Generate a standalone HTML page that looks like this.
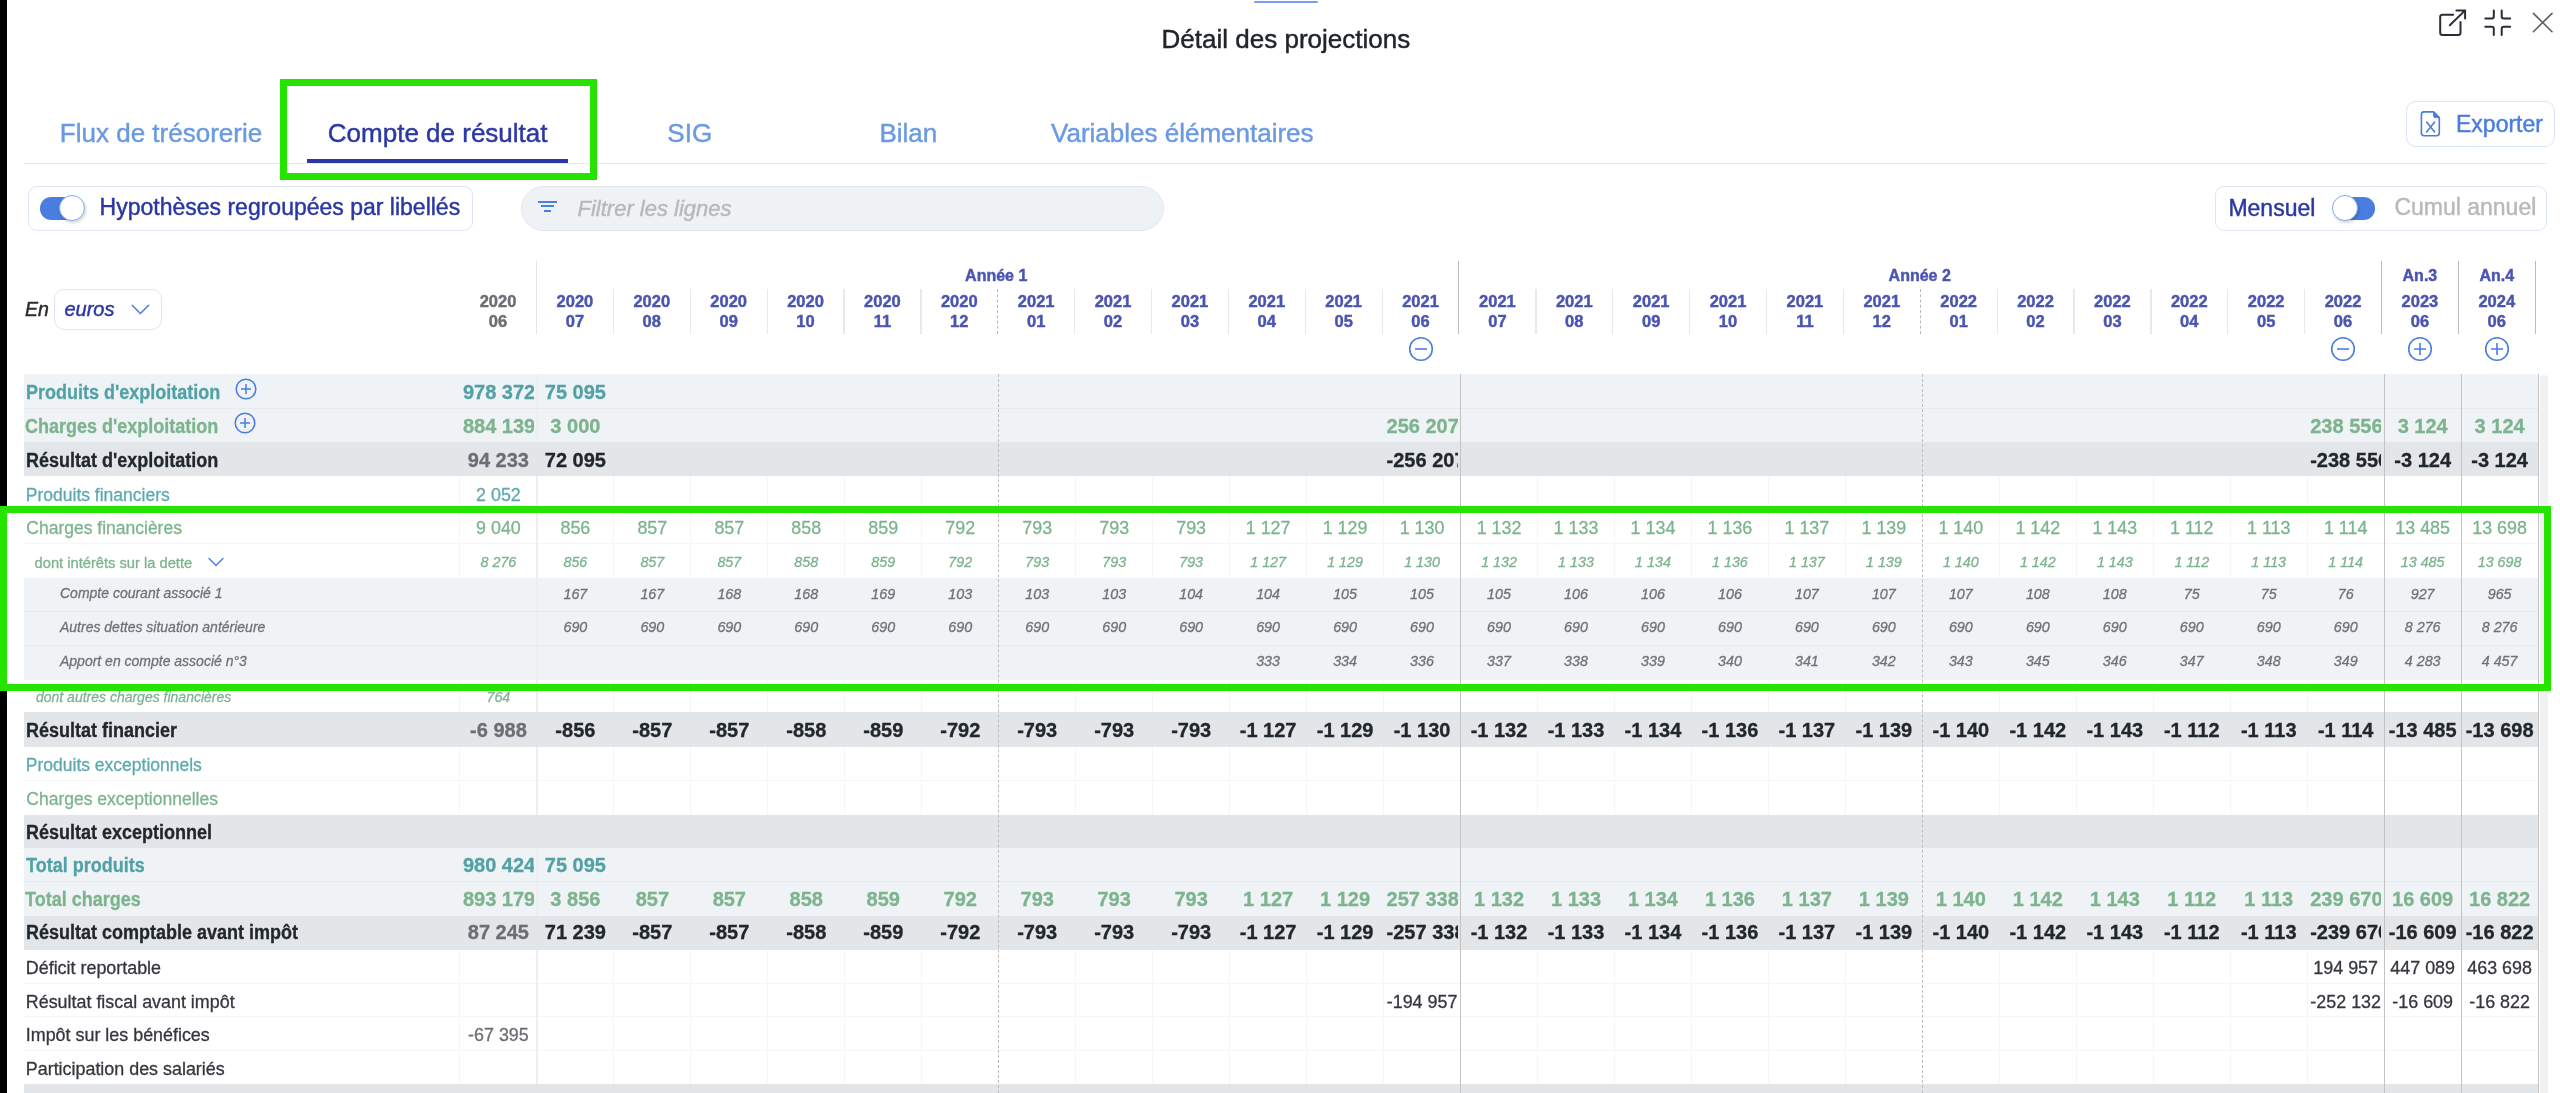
<!DOCTYPE html>
<html><head><meta charset="utf-8"><style>
html,body{margin:0;padding:0;}
body{width:2560px;height:1093px;overflow:hidden;background:#fff;position:relative;font-family:"Liberation Sans", sans-serif;}
.t{position:absolute;white-space:nowrap;line-height:normal;}
.r{position:absolute;}
.c{position:absolute;white-space:nowrap;overflow:hidden;-webkit-text-stroke:0.3px currentColor;}
.t{-webkit-text-stroke:0.45px currentColor;}
.v{text-align:center;}
#root{position:absolute;left:0;top:0;width:2560px;height:1093px;overflow:hidden;background:#fff;will-change:transform;}
</style></head><body><div id="root">
<div class="r" style="left:0.00px;top:0.00px;width:7.00px;height:1093.00px;background:#000"></div>
<div class="r" style="left:1254.00px;top:1.00px;width:64.00px;height:2.00px;background:#7b9ff0;border-radius:1px"></div>
<div class="t" style="left:885.90px;width:800px;text-align:center;top:24.04px;font-size:26px;color:#212529;font-weight:normal;font-style:normal;">Détail des projections</div>
<svg class="r" style="left:2430px;top:0px" width="130" height="50" viewBox="2430 0 130 50" fill="none">
<path d="M2453.1 14.8 H2442.5 Q2440.2 14.8 2440.2 17.1 V32.7 Q2440.2 35 2442.5 35 H2458.2 Q2460.5 35 2460.5 32.7 V22.1" stroke="#2a2d35" stroke-width="2" stroke-linecap="round"/>
<path d="M2449.8 25.2 L2465.1 10.4 M2456.4 10.4 H2465.1 V18.6" stroke="#2a2d35" stroke-width="2" stroke-linecap="round" stroke-linejoin="round"/>
<path d="M2493.8 10.4 V16.6 Q2493.8 18.6 2491.8 18.6 H2485.3 M2501.7 10.4 V16.6 Q2501.7 18.6 2503.7 18.6 H2510.2 M2485.3 26.8 H2491.8 Q2493.8 26.8 2493.8 28.8 V35 M2510.2 26.8 H2503.7 Q2501.7 26.8 2501.7 28.8 V35" stroke="#2a2d35" stroke-width="2" stroke-linecap="round"/>
<path d="M2533.4 13.4 L2552 31.7 M2552 13.4 L2533.4 31.7" stroke="#5b5e64" stroke-width="1.6" stroke-linecap="round"/>
</svg>
<div class="t" style="left:-239.00px;width:800px;text-align:center;top:117.84px;font-size:26px;color:#6b9ae3;font-weight:normal;font-style:normal;">Flux de trésorerie</div>
<div class="t" style="left:37.70px;width:800px;text-align:center;top:117.84px;font-size:26px;color:#2b37a4;font-weight:normal;font-style:normal;">Compte de résultat</div>
<div class="t" style="left:289.75px;width:800px;text-align:center;top:117.84px;font-size:26px;color:#6b9ae3;font-weight:normal;font-style:normal;">SIG</div>
<div class="t" style="left:508.40px;width:800px;text-align:center;top:117.84px;font-size:26px;color:#6b9ae3;font-weight:normal;font-style:normal;">Bilan</div>
<div class="t" style="left:782.30px;width:800px;text-align:center;top:117.84px;font-size:26px;color:#6b9ae3;font-weight:normal;font-style:normal;">Variables élémentaires</div>
<div class="r" style="left:24.00px;top:163.00px;width:2523.40px;height:1.20px;background:#e8eaed"></div>
<div class="r" style="left:307.20px;top:159.00px;width:260.60px;height:4.30px;background:#2b37a4"></div>
<div class="r" style="left:2405.60px;top:101.30px;width:149.60px;height:45.40px;border:1px solid #dae3f8;border-radius:10px;box-sizing:border-box"></div>
<svg class="r" style="left:2418px;top:108px" width="26" height="32" viewBox="2418 108 26 32" fill="none">
<path d="M2424 111.9 H2433.6 L2439.3 117.6 V133.1 Q2439.3 135.7 2436.7 135.7 H2424 Q2421.4 135.7 2421.4 133.1 V114.5 Q2421.4 111.9 2424 111.9 Z" stroke="#4a7de0" stroke-width="1.6" stroke-linejoin="round"/>
<path d="M2433.6 111.9 L2439.3 117.6 H2435.2 Q2433.6 117.6 2433.6 116 Z" fill="#4a7de0" stroke="#4a7de0" stroke-width="1" stroke-linejoin="round"/>
<path d="M2426.6 122 L2434.6 132 M2434.6 122 L2426.6 132" stroke="#4a7de0" stroke-width="1.6" stroke-linecap="round"/>
</svg>
<div class="t" style="left:2456.00px;top:110.60px;font-size:23px;color:#4a7de0;font-weight:normal;font-style:normal;">Exporter</div>
<div class="r" style="left:27.90px;top:186.25px;width:444.90px;height:44.50px;border:1px solid #dde5f6;border-radius:9px;box-sizing:border-box"></div>
<div class="r" style="left:40.30px;top:197.00px;width:36.50px;height:22.60px;background:#4a7de0;border-radius:11.3px"></div>
<div class="r" style="left:59.40px;top:195.40px;width:26.00px;height:26.00px;background:#fff;border:1.3px solid #86a8ee;border-radius:50%;box-sizing:border-box;box-shadow:1px 2px 3px rgba(0,0,0,.16)"></div>
<div class="t" style="left:99.60px;top:194.30px;font-size:23px;color:#2b37a4;font-weight:normal;font-style:normal;">Hypothèses regroupées par libellés</div>
<div class="r" style="left:521.00px;top:186.00px;width:643.30px;height:44.70px;background:#eff2f5;border:1px solid #e3e7ec;border-radius:23px;box-sizing:border-box"></div>
<div class="r" style="left:538.30px;top:200.70px;width:18.30px;height:2.00px;background:#4a7de0"></div>
<div class="r" style="left:541.00px;top:205.40px;width:13.00px;height:2.00px;background:#4a7de0"></div>
<div class="r" style="left:544.00px;top:210.40px;width:6.60px;height:2.00px;background:#4a7de0"></div>
<div class="t" style="left:577.50px;top:195.82px;font-size:22px;color:#b6b9bd;font-weight:normal;font-style:italic;">Filtrer les lignes</div>
<div class="r" style="left:2215.30px;top:186.40px;width:332.10px;height:44.30px;border:1px solid #dde5f6;border-radius:9px;box-sizing:border-box"></div>
<div class="t" style="left:2228.40px;top:194.60px;font-size:23px;color:#2b37a4;font-weight:normal;font-style:normal;">Mensuel</div>
<div class="r" style="left:2338.50px;top:197.30px;width:36.60px;height:22.40px;background:#4a7de0;border-radius:11.2px"></div>
<div class="r" style="left:2331.90px;top:195.40px;width:26.00px;height:26.00px;background:#fff;border:1.3px solid #86a8ee;border-radius:50%;box-sizing:border-box;box-shadow:1px 2px 3px rgba(0,0,0,.16)"></div>
<div class="t" style="left:2394.40px;top:194.30px;font-size:23px;color:#b9b9b9;font-weight:normal;font-style:normal;">Cumul annuel</div>
<div class="t" style="left:25.10px;top:298.03px;font-size:19.5px;color:#2b2b2b;font-weight:normal;font-style:italic;">En</div>
<div class="r" style="left:53.70px;top:288.60px;width:108.30px;height:41.40px;border:1px solid #dde5f6;border-radius:10px;box-sizing:border-box"></div>
<div class="t" style="left:64.40px;top:297.77px;font-size:20px;color:#2b37a4;font-weight:normal;font-style:italic;">euros</div>
<svg class="r" style="left:128px;top:300px" width="24" height="18" viewBox="128 300 24 18" fill="none"><path d="M132.2 305.2 L140.4 313.6 L148.6 305.2" stroke="#4a7de0" stroke-width="1.5" stroke-linecap="round" stroke-linejoin="round"/></svg>
<div class="r" style="left:535.98px;top:261.00px;width:1.00px;height:72.50px;background:#e4e6ea"></div>
<div class="r" style="left:612.75px;top:288.50px;width:1.30px;height:45.00px;background:#e7e9ee"></div>
<div class="r" style="left:689.62px;top:288.50px;width:1.30px;height:45.00px;background:#e7e9ee"></div>
<div class="r" style="left:766.50px;top:288.50px;width:1.30px;height:45.00px;background:#e7e9ee"></div>
<div class="r" style="left:843.38px;top:288.50px;width:1.30px;height:45.00px;background:#e7e9ee"></div>
<div class="r" style="left:920.25px;top:288.50px;width:1.30px;height:45.00px;background:#e7e9ee"></div>
<div class="r" style="left:997.12px;top:288.5px;width:0;height:45px;border-left:1.2px dashed #b9b9b9"></div>
<div class="r" style="left:1074.00px;top:288.50px;width:1.30px;height:45.00px;background:#e7e9ee"></div>
<div class="r" style="left:1150.88px;top:288.50px;width:1.30px;height:45.00px;background:#e7e9ee"></div>
<div class="r" style="left:1227.75px;top:288.50px;width:1.30px;height:45.00px;background:#e7e9ee"></div>
<div class="r" style="left:1304.62px;top:288.50px;width:1.30px;height:45.00px;background:#e7e9ee"></div>
<div class="r" style="left:1381.50px;top:288.50px;width:1.30px;height:45.00px;background:#e7e9ee"></div>
<div class="r" style="left:1458.47px;top:261.00px;width:1.00px;height:72.50px;background:#bcbcbc"></div>
<div class="r" style="left:1535.25px;top:288.50px;width:1.30px;height:45.00px;background:#e7e9ee"></div>
<div class="r" style="left:1612.12px;top:288.50px;width:1.30px;height:45.00px;background:#e7e9ee"></div>
<div class="r" style="left:1689.00px;top:288.50px;width:1.30px;height:45.00px;background:#e7e9ee"></div>
<div class="r" style="left:1765.88px;top:288.50px;width:1.30px;height:45.00px;background:#e7e9ee"></div>
<div class="r" style="left:1842.75px;top:288.50px;width:1.30px;height:45.00px;background:#e7e9ee"></div>
<div class="r" style="left:1919.62px;top:288.5px;width:0;height:45px;border-left:1.2px dashed #b9b9b9"></div>
<div class="r" style="left:1996.50px;top:288.50px;width:1.30px;height:45.00px;background:#e7e9ee"></div>
<div class="r" style="left:2073.38px;top:288.50px;width:1.30px;height:45.00px;background:#e7e9ee"></div>
<div class="r" style="left:2150.25px;top:288.50px;width:1.30px;height:45.00px;background:#e7e9ee"></div>
<div class="r" style="left:2227.12px;top:288.50px;width:1.30px;height:45.00px;background:#e7e9ee"></div>
<div class="r" style="left:2304.00px;top:288.50px;width:1.30px;height:45.00px;background:#e7e9ee"></div>
<div class="r" style="left:2380.97px;top:261.00px;width:1.00px;height:72.50px;background:#bcbcbc"></div>
<div class="r" style="left:2457.85px;top:261.00px;width:1.00px;height:72.50px;background:#bcbcbc"></div>
<div class="r" style="left:2534.72px;top:261.00px;width:1.00px;height:72.50px;background:#bcbcbc"></div>
<div class="t" style="left:596.22px;width:800px;text-align:center;top:266.65px;font-size:16px;color:#4b55b1;font-weight:bold;font-style:normal;">Année 1</div>
<div class="t" style="left:1519.72px;width:800px;text-align:center;top:266.65px;font-size:16px;color:#4b55b1;font-weight:bold;font-style:normal;">Année 2</div>
<div class="t" style="left:2019.91px;width:800px;text-align:center;top:266.65px;font-size:16px;color:#4b55b1;font-weight:bold;font-style:normal;">An.3</div>
<div class="t" style="left:2096.79px;width:800px;text-align:center;top:266.65px;font-size:16px;color:#4b55b1;font-weight:bold;font-style:normal;">An.4</div>
<div class="t" style="left:98.04px;width:800px;text-align:center;top:291.99px;font-size:16.5px;color:#6c6e73;font-weight:bold;font-style:normal;">2020</div>
<div class="t" style="left:98.04px;width:800px;text-align:center;top:312.39px;font-size:16.5px;color:#6c6e73;font-weight:bold;font-style:normal;">06</div>
<div class="t" style="left:174.91px;width:800px;text-align:center;top:291.99px;font-size:16.5px;color:#4b55b1;font-weight:bold;font-style:normal;">2020</div>
<div class="t" style="left:174.91px;width:800px;text-align:center;top:312.39px;font-size:16.5px;color:#4b55b1;font-weight:bold;font-style:normal;">07</div>
<div class="t" style="left:251.79px;width:800px;text-align:center;top:291.99px;font-size:16.5px;color:#4b55b1;font-weight:bold;font-style:normal;">2020</div>
<div class="t" style="left:251.79px;width:800px;text-align:center;top:312.39px;font-size:16.5px;color:#4b55b1;font-weight:bold;font-style:normal;">08</div>
<div class="t" style="left:328.66px;width:800px;text-align:center;top:291.99px;font-size:16.5px;color:#4b55b1;font-weight:bold;font-style:normal;">2020</div>
<div class="t" style="left:328.66px;width:800px;text-align:center;top:312.39px;font-size:16.5px;color:#4b55b1;font-weight:bold;font-style:normal;">09</div>
<div class="t" style="left:405.54px;width:800px;text-align:center;top:291.99px;font-size:16.5px;color:#4b55b1;font-weight:bold;font-style:normal;">2020</div>
<div class="t" style="left:405.54px;width:800px;text-align:center;top:312.39px;font-size:16.5px;color:#4b55b1;font-weight:bold;font-style:normal;">10</div>
<div class="t" style="left:482.41px;width:800px;text-align:center;top:291.99px;font-size:16.5px;color:#4b55b1;font-weight:bold;font-style:normal;">2020</div>
<div class="t" style="left:482.41px;width:800px;text-align:center;top:312.39px;font-size:16.5px;color:#4b55b1;font-weight:bold;font-style:normal;">11</div>
<div class="t" style="left:559.29px;width:800px;text-align:center;top:291.99px;font-size:16.5px;color:#4b55b1;font-weight:bold;font-style:normal;">2020</div>
<div class="t" style="left:559.29px;width:800px;text-align:center;top:312.39px;font-size:16.5px;color:#4b55b1;font-weight:bold;font-style:normal;">12</div>
<div class="t" style="left:636.16px;width:800px;text-align:center;top:291.99px;font-size:16.5px;color:#4b55b1;font-weight:bold;font-style:normal;">2021</div>
<div class="t" style="left:636.16px;width:800px;text-align:center;top:312.39px;font-size:16.5px;color:#4b55b1;font-weight:bold;font-style:normal;">01</div>
<div class="t" style="left:713.04px;width:800px;text-align:center;top:291.99px;font-size:16.5px;color:#4b55b1;font-weight:bold;font-style:normal;">2021</div>
<div class="t" style="left:713.04px;width:800px;text-align:center;top:312.39px;font-size:16.5px;color:#4b55b1;font-weight:bold;font-style:normal;">02</div>
<div class="t" style="left:789.91px;width:800px;text-align:center;top:291.99px;font-size:16.5px;color:#4b55b1;font-weight:bold;font-style:normal;">2021</div>
<div class="t" style="left:789.91px;width:800px;text-align:center;top:312.39px;font-size:16.5px;color:#4b55b1;font-weight:bold;font-style:normal;">03</div>
<div class="t" style="left:866.79px;width:800px;text-align:center;top:291.99px;font-size:16.5px;color:#4b55b1;font-weight:bold;font-style:normal;">2021</div>
<div class="t" style="left:866.79px;width:800px;text-align:center;top:312.39px;font-size:16.5px;color:#4b55b1;font-weight:bold;font-style:normal;">04</div>
<div class="t" style="left:943.66px;width:800px;text-align:center;top:291.99px;font-size:16.5px;color:#4b55b1;font-weight:bold;font-style:normal;">2021</div>
<div class="t" style="left:943.66px;width:800px;text-align:center;top:312.39px;font-size:16.5px;color:#4b55b1;font-weight:bold;font-style:normal;">05</div>
<div class="t" style="left:1020.54px;width:800px;text-align:center;top:291.99px;font-size:16.5px;color:#4b55b1;font-weight:bold;font-style:normal;">2021</div>
<div class="t" style="left:1020.54px;width:800px;text-align:center;top:312.39px;font-size:16.5px;color:#4b55b1;font-weight:bold;font-style:normal;">06</div>
<div class="t" style="left:1097.41px;width:800px;text-align:center;top:291.99px;font-size:16.5px;color:#4b55b1;font-weight:bold;font-style:normal;">2021</div>
<div class="t" style="left:1097.41px;width:800px;text-align:center;top:312.39px;font-size:16.5px;color:#4b55b1;font-weight:bold;font-style:normal;">07</div>
<div class="t" style="left:1174.29px;width:800px;text-align:center;top:291.99px;font-size:16.5px;color:#4b55b1;font-weight:bold;font-style:normal;">2021</div>
<div class="t" style="left:1174.29px;width:800px;text-align:center;top:312.39px;font-size:16.5px;color:#4b55b1;font-weight:bold;font-style:normal;">08</div>
<div class="t" style="left:1251.16px;width:800px;text-align:center;top:291.99px;font-size:16.5px;color:#4b55b1;font-weight:bold;font-style:normal;">2021</div>
<div class="t" style="left:1251.16px;width:800px;text-align:center;top:312.39px;font-size:16.5px;color:#4b55b1;font-weight:bold;font-style:normal;">09</div>
<div class="t" style="left:1328.04px;width:800px;text-align:center;top:291.99px;font-size:16.5px;color:#4b55b1;font-weight:bold;font-style:normal;">2021</div>
<div class="t" style="left:1328.04px;width:800px;text-align:center;top:312.39px;font-size:16.5px;color:#4b55b1;font-weight:bold;font-style:normal;">10</div>
<div class="t" style="left:1404.91px;width:800px;text-align:center;top:291.99px;font-size:16.5px;color:#4b55b1;font-weight:bold;font-style:normal;">2021</div>
<div class="t" style="left:1404.91px;width:800px;text-align:center;top:312.39px;font-size:16.5px;color:#4b55b1;font-weight:bold;font-style:normal;">11</div>
<div class="t" style="left:1481.79px;width:800px;text-align:center;top:291.99px;font-size:16.5px;color:#4b55b1;font-weight:bold;font-style:normal;">2021</div>
<div class="t" style="left:1481.79px;width:800px;text-align:center;top:312.39px;font-size:16.5px;color:#4b55b1;font-weight:bold;font-style:normal;">12</div>
<div class="t" style="left:1558.66px;width:800px;text-align:center;top:291.99px;font-size:16.5px;color:#4b55b1;font-weight:bold;font-style:normal;">2022</div>
<div class="t" style="left:1558.66px;width:800px;text-align:center;top:312.39px;font-size:16.5px;color:#4b55b1;font-weight:bold;font-style:normal;">01</div>
<div class="t" style="left:1635.54px;width:800px;text-align:center;top:291.99px;font-size:16.5px;color:#4b55b1;font-weight:bold;font-style:normal;">2022</div>
<div class="t" style="left:1635.54px;width:800px;text-align:center;top:312.39px;font-size:16.5px;color:#4b55b1;font-weight:bold;font-style:normal;">02</div>
<div class="t" style="left:1712.41px;width:800px;text-align:center;top:291.99px;font-size:16.5px;color:#4b55b1;font-weight:bold;font-style:normal;">2022</div>
<div class="t" style="left:1712.41px;width:800px;text-align:center;top:312.39px;font-size:16.5px;color:#4b55b1;font-weight:bold;font-style:normal;">03</div>
<div class="t" style="left:1789.29px;width:800px;text-align:center;top:291.99px;font-size:16.5px;color:#4b55b1;font-weight:bold;font-style:normal;">2022</div>
<div class="t" style="left:1789.29px;width:800px;text-align:center;top:312.39px;font-size:16.5px;color:#4b55b1;font-weight:bold;font-style:normal;">04</div>
<div class="t" style="left:1866.16px;width:800px;text-align:center;top:291.99px;font-size:16.5px;color:#4b55b1;font-weight:bold;font-style:normal;">2022</div>
<div class="t" style="left:1866.16px;width:800px;text-align:center;top:312.39px;font-size:16.5px;color:#4b55b1;font-weight:bold;font-style:normal;">05</div>
<div class="t" style="left:1943.04px;width:800px;text-align:center;top:291.99px;font-size:16.5px;color:#4b55b1;font-weight:bold;font-style:normal;">2022</div>
<div class="t" style="left:1943.04px;width:800px;text-align:center;top:312.39px;font-size:16.5px;color:#4b55b1;font-weight:bold;font-style:normal;">06</div>
<div class="t" style="left:2019.91px;width:800px;text-align:center;top:291.99px;font-size:16.5px;color:#4b55b1;font-weight:bold;font-style:normal;">2023</div>
<div class="t" style="left:2019.91px;width:800px;text-align:center;top:312.39px;font-size:16.5px;color:#4b55b1;font-weight:bold;font-style:normal;">06</div>
<div class="t" style="left:2096.79px;width:800px;text-align:center;top:291.99px;font-size:16.5px;color:#4b55b1;font-weight:bold;font-style:normal;">2024</div>
<div class="t" style="left:2096.79px;width:800px;text-align:center;top:312.39px;font-size:16.5px;color:#4b55b1;font-weight:bold;font-style:normal;">06</div>
<svg class="r" style="left:1406.54px;top:335.40px" width="28" height="28" viewBox="0 0 28 28" fill="none"><circle cx="14" cy="14" r="11.3" stroke="#4a7de0" stroke-width="1.6"/><path d="M8 14 H20" stroke="#4a7de0" stroke-width="1.6"/></svg>
<svg class="r" style="left:2329.04px;top:335.40px" width="28" height="28" viewBox="0 0 28 28" fill="none"><circle cx="14" cy="14" r="11.3" stroke="#4a7de0" stroke-width="1.6"/><path d="M8 14 H20" stroke="#4a7de0" stroke-width="1.6"/></svg>
<svg class="r" style="left:2405.91px;top:335.40px" width="28" height="28" viewBox="0 0 28 28" fill="none"><circle cx="14" cy="14" r="11.3" stroke="#4a7de0" stroke-width="1.6"/><path d="M8 14 H20 M14 8 V20" stroke="#4a7de0" stroke-width="1.6"/></svg>
<svg class="r" style="left:2482.79px;top:335.40px" width="28" height="28" viewBox="0 0 28 28" fill="none"><circle cx="14" cy="14" r="11.3" stroke="#4a7de0" stroke-width="1.6"/><path d="M8 14 H20 M14 8 V20" stroke="#4a7de0" stroke-width="1.6"/></svg>
<div class="r" style="left:24.00px;top:373.70px;width:2514.12px;height:34.40px;background:#f0f3f6"></div>
<div class="r" style="left:24.00px;top:408.10px;width:2514.12px;height:34.20px;background:#f0f3f6"></div>
<div class="r" style="left:24.00px;top:442.30px;width:2514.12px;height:34.10px;background:#e3e6e9"></div>
<div class="r" style="left:24.00px;top:476.40px;width:2514.12px;height:33.50px;background:#fff"></div>
<div class="r" style="left:24.00px;top:509.90px;width:2514.12px;height:33.40px;background:#fff"></div>
<div class="r" style="left:24.00px;top:543.30px;width:2514.12px;height:34.60px;background:#fff"></div>
<div class="r" style="left:24.00px;top:577.90px;width:2514.12px;height:34.00px;background:#f0f3f6"></div>
<div class="r" style="left:24.00px;top:611.90px;width:2514.12px;height:33.70px;background:#f0f3f6"></div>
<div class="r" style="left:24.00px;top:645.60px;width:2514.12px;height:34.40px;background:#f0f3f6"></div>
<div class="r" style="left:24.00px;top:680.00px;width:2514.12px;height:32.40px;background:#fff"></div>
<div class="r" style="left:24.00px;top:712.40px;width:2514.12px;height:34.60px;background:#e3e6e9"></div>
<div class="r" style="left:24.00px;top:747.00px;width:2514.12px;height:33.50px;background:#fff"></div>
<div class="r" style="left:24.00px;top:780.50px;width:2514.12px;height:34.00px;background:#fff"></div>
<div class="r" style="left:24.00px;top:814.50px;width:2514.12px;height:33.70px;background:#e3e6e9"></div>
<div class="r" style="left:24.00px;top:848.20px;width:2514.12px;height:33.50px;background:#f0f3f6"></div>
<div class="r" style="left:24.00px;top:881.70px;width:2514.12px;height:34.20px;background:#f0f3f6"></div>
<div class="r" style="left:24.00px;top:915.90px;width:2514.12px;height:33.80px;background:#e3e6e9"></div>
<div class="r" style="left:24.00px;top:949.70px;width:2514.12px;height:33.70px;background:#fff"></div>
<div class="r" style="left:24.00px;top:983.40px;width:2514.12px;height:33.10px;background:#fff"></div>
<div class="r" style="left:24.00px;top:1016.50px;width:2514.12px;height:33.50px;background:#fff"></div>
<div class="r" style="left:24.00px;top:1050.00px;width:2514.12px;height:34.20px;background:#fff"></div>
<div class="r" style="left:24.00px;top:1084.20px;width:2514.12px;height:33.80px;background:#e3e6e9"></div>
<div class="r" style="left:24.00px;top:407.60px;width:2514.12px;height:1.00px;background:rgba(0,0,0,0.035)"></div>
<div class="r" style="left:24.00px;top:509.40px;width:2514.12px;height:1.00px;background:rgba(0,0,0,0.035)"></div>
<div class="r" style="left:24.00px;top:542.80px;width:2514.12px;height:1.00px;background:rgba(0,0,0,0.035)"></div>
<div class="r" style="left:24.00px;top:611.40px;width:2514.12px;height:1.00px;background:rgba(0,0,0,0.035)"></div>
<div class="r" style="left:24.00px;top:645.10px;width:2514.12px;height:1.00px;background:rgba(0,0,0,0.035)"></div>
<div class="r" style="left:24.00px;top:780.00px;width:2514.12px;height:1.00px;background:rgba(0,0,0,0.035)"></div>
<div class="r" style="left:24.00px;top:881.20px;width:2514.12px;height:1.00px;background:rgba(0,0,0,0.035)"></div>
<div class="r" style="left:24.00px;top:982.90px;width:2514.12px;height:1.00px;background:rgba(0,0,0,0.035)"></div>
<div class="r" style="left:24.00px;top:1016.00px;width:2514.12px;height:1.00px;background:rgba(0,0,0,0.035)"></div>
<div class="r" style="left:24.00px;top:1049.50px;width:2514.12px;height:1.00px;background:rgba(0,0,0,0.035)"></div>
<div class="r" style="left:459.43px;top:374.00px;width:1.00px;height:719.00px;background:#f5f6f8;mix-blend-mode:darken"></div>
<div class="r" style="left:536.15px;top:374.00px;width:1.50px;height:719.00px;background:#eceef1;mix-blend-mode:darken"></div>
<div class="r" style="left:613.37px;top:374.00px;width:1.00px;height:719.00px;background:#f5f6f8;mix-blend-mode:darken"></div>
<div class="r" style="left:690.34px;top:374.00px;width:1.00px;height:719.00px;background:#f5f6f8;mix-blend-mode:darken"></div>
<div class="r" style="left:767.31px;top:374.00px;width:1.00px;height:719.00px;background:#f5f6f8;mix-blend-mode:darken"></div>
<div class="r" style="left:844.28px;top:374.00px;width:1.00px;height:719.00px;background:#f5f6f8;mix-blend-mode:darken"></div>
<div class="r" style="left:921.25px;top:374.00px;width:1.00px;height:719.00px;background:#f5f6f8;mix-blend-mode:darken"></div>
<div class="r" style="left:998.12px;top:374.0px;width:0;height:719.0px;border-left:1.2px dashed #bdbdbd"></div>
<div class="r" style="left:1075.19px;top:374.00px;width:1.00px;height:719.00px;background:#f5f6f8;mix-blend-mode:darken"></div>
<div class="r" style="left:1152.16px;top:374.00px;width:1.00px;height:719.00px;background:#f5f6f8;mix-blend-mode:darken"></div>
<div class="r" style="left:1229.13px;top:374.00px;width:1.00px;height:719.00px;background:#f5f6f8;mix-blend-mode:darken"></div>
<div class="r" style="left:1306.10px;top:374.00px;width:1.00px;height:719.00px;background:#f5f6f8;mix-blend-mode:darken"></div>
<div class="r" style="left:1383.07px;top:374.00px;width:1.00px;height:719.00px;background:#f5f6f8;mix-blend-mode:darken"></div>
<div class="r" style="left:1460.04px;top:374.00px;width:1.10px;height:719.00px;background:#c3c3c3"></div>
<div class="r" style="left:1537.01px;top:374.00px;width:1.00px;height:719.00px;background:#f5f6f8;mix-blend-mode:darken"></div>
<div class="r" style="left:1613.98px;top:374.00px;width:1.00px;height:719.00px;background:#f5f6f8;mix-blend-mode:darken"></div>
<div class="r" style="left:1690.95px;top:374.00px;width:1.00px;height:719.00px;background:#f5f6f8;mix-blend-mode:darken"></div>
<div class="r" style="left:1767.92px;top:374.00px;width:1.00px;height:719.00px;background:#f5f6f8;mix-blend-mode:darken"></div>
<div class="r" style="left:1844.89px;top:374.00px;width:1.00px;height:719.00px;background:#f5f6f8;mix-blend-mode:darken"></div>
<div class="r" style="left:1921.76px;top:374.0px;width:0;height:719.0px;border-left:1.2px dashed #bdbdbd"></div>
<div class="r" style="left:1998.83px;top:374.00px;width:1.00px;height:719.00px;background:#f5f6f8;mix-blend-mode:darken"></div>
<div class="r" style="left:2075.80px;top:374.00px;width:1.00px;height:719.00px;background:#f5f6f8;mix-blend-mode:darken"></div>
<div class="r" style="left:2152.77px;top:374.00px;width:1.00px;height:719.00px;background:#f5f6f8;mix-blend-mode:darken"></div>
<div class="r" style="left:2229.74px;top:374.00px;width:1.00px;height:719.00px;background:#f5f6f8;mix-blend-mode:darken"></div>
<div class="r" style="left:2306.71px;top:374.00px;width:1.00px;height:719.00px;background:#f5f6f8;mix-blend-mode:darken"></div>
<div class="r" style="left:2383.68px;top:374.00px;width:1.10px;height:719.00px;background:#c3c3c3"></div>
<div class="r" style="left:2460.65px;top:374.00px;width:1.10px;height:719.00px;background:#c3c3c3"></div>
<div class="r" style="left:2537.62px;top:374.00px;width:1.10px;height:719.00px;background:#c3c3c3"></div>
<div class="r" style="left:2540.30px;top:374.60px;width:7.30px;height:728.40px;background:#f1f1f1;border-radius:4px 4px 0 0"></div>
<div class="c" style="left:25.60px;top:375.60px;height:33.8px;line-height:33.8px;overflow:visible;transform-origin:0 0;transform:scaleX(0.9);font-size:20px;font-weight:bold;font-style:normal;color:#52a1a6">Produits d'exploitation</div>
<svg class="r" style="left:232.50px;top:375.90px" width="26" height="26" viewBox="0 0 26 26" fill="none"><circle cx="13" cy="13" r="9.8" stroke="#4a7de0" stroke-width="1.5"/><path d="M8 13 H18 M13 8 V18" stroke="#4a7de0" stroke-width="1.5"/></svg>
<div class="c v" style="left:462.93px;width:70.97px;top:375.60px;height:33.8px;line-height:33.8px;font-size:20px;font-weight:bold;font-style:normal;color:#52a1a6">978 372</div>
<div class="c v" style="left:539.90px;width:70.97px;top:375.60px;height:33.8px;line-height:33.8px;font-size:20px;font-weight:bold;font-style:normal;color:#52a1a6">75 095</div>
<div class="c" style="left:25.30px;top:409.90px;height:33.8px;line-height:33.8px;overflow:visible;transform-origin:0 0;transform:scaleX(0.9);font-size:20px;font-weight:bold;font-style:normal;color:#7db48f">Charges d'exploitation</div>
<svg class="r" style="left:231.50px;top:410.20px" width="26" height="26" viewBox="0 0 26 26" fill="none"><circle cx="13" cy="13" r="9.8" stroke="#4a7de0" stroke-width="1.5"/><path d="M8 13 H18 M13 8 V18" stroke="#4a7de0" stroke-width="1.5"/></svg>
<div class="c v" style="left:462.93px;width:70.97px;top:409.90px;height:33.8px;line-height:33.8px;font-size:20px;font-weight:bold;font-style:normal;color:#7db48f">884 139</div>
<div class="c v" style="left:539.90px;width:70.97px;top:409.90px;height:33.8px;line-height:33.8px;font-size:20px;font-weight:bold;font-style:normal;color:#7db48f">3 000</div>
<div class="c v" style="left:1386.57px;width:70.97px;top:409.90px;height:33.8px;line-height:33.8px;font-size:20px;font-weight:bold;font-style:normal;color:#7db48f">256 207</div>
<div class="c v" style="left:2310.21px;width:70.97px;top:409.90px;height:33.8px;line-height:33.8px;font-size:20px;font-weight:bold;font-style:normal;color:#7db48f">238 556</div>
<div class="c v" style="left:2387.18px;width:70.97px;top:409.90px;height:33.8px;line-height:33.8px;font-size:20px;font-weight:bold;font-style:normal;color:#7db48f">3 124</div>
<div class="c v" style="left:2464.15px;width:70.97px;top:409.90px;height:33.8px;line-height:33.8px;font-size:20px;font-weight:bold;font-style:normal;color:#7db48f">3 124</div>
<div class="c" style="left:25.60px;top:444.05px;height:33.8px;line-height:33.8px;overflow:visible;transform-origin:0 0;transform:scaleX(0.9);font-size:20px;font-weight:bold;font-style:normal;color:#22262d">Résultat d'exploitation</div>
<div class="c v" style="left:462.93px;width:70.97px;top:444.05px;height:33.8px;line-height:33.8px;font-size:20px;font-weight:bold;font-style:normal;color:#6b6e73">94 233</div>
<div class="c v" style="left:539.90px;width:70.97px;top:444.05px;height:33.8px;line-height:33.8px;font-size:20px;font-weight:bold;font-style:normal;color:#22262d">72 095</div>
<div class="c v" style="left:1386.57px;width:70.97px;top:444.05px;height:33.8px;line-height:33.8px;font-size:20px;font-weight:bold;font-style:normal;color:#22262d">-256 207</div>
<div class="c v" style="left:2310.21px;width:70.97px;top:444.05px;height:33.8px;line-height:33.8px;font-size:20px;font-weight:bold;font-style:normal;color:#22262d">-238 556</div>
<div class="c v" style="left:2387.18px;width:70.97px;top:444.05px;height:33.8px;line-height:33.8px;font-size:20px;font-weight:bold;font-style:normal;color:#22262d">-3 124</div>
<div class="c v" style="left:2464.15px;width:70.97px;top:444.05px;height:33.8px;line-height:33.8px;font-size:20px;font-weight:bold;font-style:normal;color:#22262d">-3 124</div>
<div class="c" style="left:25.80px;top:478.75px;height:33.8px;line-height:33.8px;overflow:visible;transform-origin:0 0;transform:scaleX(1);font-size:17.5px;font-weight:normal;font-style:normal;color:#5ea9ae">Produits financiers</div>
<div class="c v" style="left:462.93px;width:70.97px;top:478.75px;height:33.8px;line-height:33.8px;font-size:17.9px;font-weight:normal;font-style:normal;color:#5ea9ae">2 052</div>
<div class="c" style="left:26.30px;top:512.20px;height:33.8px;line-height:33.8px;overflow:visible;transform-origin:0 0;transform:scaleX(1);font-size:17.5px;font-weight:normal;font-style:normal;color:#7db48f">Charges financières</div>
<div class="c v" style="left:462.93px;width:70.97px;top:512.20px;height:33.8px;line-height:33.8px;font-size:17.9px;font-weight:normal;font-style:normal;color:#7db48f">9 040</div>
<div class="c v" style="left:539.90px;width:70.97px;top:512.20px;height:33.8px;line-height:33.8px;font-size:17.9px;font-weight:normal;font-style:normal;color:#7db48f">856</div>
<div class="c v" style="left:616.87px;width:70.97px;top:512.20px;height:33.8px;line-height:33.8px;font-size:17.9px;font-weight:normal;font-style:normal;color:#7db48f">857</div>
<div class="c v" style="left:693.84px;width:70.97px;top:512.20px;height:33.8px;line-height:33.8px;font-size:17.9px;font-weight:normal;font-style:normal;color:#7db48f">857</div>
<div class="c v" style="left:770.81px;width:70.97px;top:512.20px;height:33.8px;line-height:33.8px;font-size:17.9px;font-weight:normal;font-style:normal;color:#7db48f">858</div>
<div class="c v" style="left:847.78px;width:70.97px;top:512.20px;height:33.8px;line-height:33.8px;font-size:17.9px;font-weight:normal;font-style:normal;color:#7db48f">859</div>
<div class="c v" style="left:924.75px;width:70.97px;top:512.20px;height:33.8px;line-height:33.8px;font-size:17.9px;font-weight:normal;font-style:normal;color:#7db48f">792</div>
<div class="c v" style="left:1001.72px;width:70.97px;top:512.20px;height:33.8px;line-height:33.8px;font-size:17.9px;font-weight:normal;font-style:normal;color:#7db48f">793</div>
<div class="c v" style="left:1078.69px;width:70.97px;top:512.20px;height:33.8px;line-height:33.8px;font-size:17.9px;font-weight:normal;font-style:normal;color:#7db48f">793</div>
<div class="c v" style="left:1155.66px;width:70.97px;top:512.20px;height:33.8px;line-height:33.8px;font-size:17.9px;font-weight:normal;font-style:normal;color:#7db48f">793</div>
<div class="c v" style="left:1232.63px;width:70.97px;top:512.20px;height:33.8px;line-height:33.8px;font-size:17.9px;font-weight:normal;font-style:normal;color:#7db48f">1 127</div>
<div class="c v" style="left:1309.60px;width:70.97px;top:512.20px;height:33.8px;line-height:33.8px;font-size:17.9px;font-weight:normal;font-style:normal;color:#7db48f">1 129</div>
<div class="c v" style="left:1386.57px;width:70.97px;top:512.20px;height:33.8px;line-height:33.8px;font-size:17.9px;font-weight:normal;font-style:normal;color:#7db48f">1 130</div>
<div class="c v" style="left:1463.54px;width:70.97px;top:512.20px;height:33.8px;line-height:33.8px;font-size:17.9px;font-weight:normal;font-style:normal;color:#7db48f">1 132</div>
<div class="c v" style="left:1540.51px;width:70.97px;top:512.20px;height:33.8px;line-height:33.8px;font-size:17.9px;font-weight:normal;font-style:normal;color:#7db48f">1 133</div>
<div class="c v" style="left:1617.48px;width:70.97px;top:512.20px;height:33.8px;line-height:33.8px;font-size:17.9px;font-weight:normal;font-style:normal;color:#7db48f">1 134</div>
<div class="c v" style="left:1694.45px;width:70.97px;top:512.20px;height:33.8px;line-height:33.8px;font-size:17.9px;font-weight:normal;font-style:normal;color:#7db48f">1 136</div>
<div class="c v" style="left:1771.42px;width:70.97px;top:512.20px;height:33.8px;line-height:33.8px;font-size:17.9px;font-weight:normal;font-style:normal;color:#7db48f">1 137</div>
<div class="c v" style="left:1848.39px;width:70.97px;top:512.20px;height:33.8px;line-height:33.8px;font-size:17.9px;font-weight:normal;font-style:normal;color:#7db48f">1 139</div>
<div class="c v" style="left:1925.36px;width:70.97px;top:512.20px;height:33.8px;line-height:33.8px;font-size:17.9px;font-weight:normal;font-style:normal;color:#7db48f">1 140</div>
<div class="c v" style="left:2002.33px;width:70.97px;top:512.20px;height:33.8px;line-height:33.8px;font-size:17.9px;font-weight:normal;font-style:normal;color:#7db48f">1 142</div>
<div class="c v" style="left:2079.30px;width:70.97px;top:512.20px;height:33.8px;line-height:33.8px;font-size:17.9px;font-weight:normal;font-style:normal;color:#7db48f">1 143</div>
<div class="c v" style="left:2156.27px;width:70.97px;top:512.20px;height:33.8px;line-height:33.8px;font-size:17.9px;font-weight:normal;font-style:normal;color:#7db48f">1 112</div>
<div class="c v" style="left:2233.24px;width:70.97px;top:512.20px;height:33.8px;line-height:33.8px;font-size:17.9px;font-weight:normal;font-style:normal;color:#7db48f">1 113</div>
<div class="c v" style="left:2310.21px;width:70.97px;top:512.20px;height:33.8px;line-height:33.8px;font-size:17.9px;font-weight:normal;font-style:normal;color:#7db48f">1 114</div>
<div class="c v" style="left:2387.18px;width:70.97px;top:512.20px;height:33.8px;line-height:33.8px;font-size:17.9px;font-weight:normal;font-style:normal;color:#7db48f">13 485</div>
<div class="c v" style="left:2464.15px;width:70.97px;top:512.20px;height:33.8px;line-height:33.8px;font-size:17.9px;font-weight:normal;font-style:normal;color:#7db48f">13 698</div>
<div class="c" style="left:34.60px;top:547.30px;height:33.8px;line-height:33.8px;overflow:visible;transform-origin:0 0;transform:scaleX(1);font-size:14.7px;font-weight:normal;font-style:normal;color:#7db48f">dont intérêts sur la dette</div>
<svg class="r" style="left:205px;top:550.60px" width="22" height="20" viewBox="205 550.60 22 20" fill="none"><path d="M209 558.10 L216 565.10 L223 558.10" stroke="#4a7de0" stroke-width="1.4" stroke-linecap="round" stroke-linejoin="round"/></svg>
<div class="c v" style="left:462.93px;width:70.97px;top:546.20px;height:33.8px;line-height:33.8px;font-size:14.3px;font-weight:normal;font-style:italic;color:#7db48f">8 276</div>
<div class="c v" style="left:539.90px;width:70.97px;top:546.20px;height:33.8px;line-height:33.8px;font-size:14.3px;font-weight:normal;font-style:italic;color:#7db48f">856</div>
<div class="c v" style="left:616.87px;width:70.97px;top:546.20px;height:33.8px;line-height:33.8px;font-size:14.3px;font-weight:normal;font-style:italic;color:#7db48f">857</div>
<div class="c v" style="left:693.84px;width:70.97px;top:546.20px;height:33.8px;line-height:33.8px;font-size:14.3px;font-weight:normal;font-style:italic;color:#7db48f">857</div>
<div class="c v" style="left:770.81px;width:70.97px;top:546.20px;height:33.8px;line-height:33.8px;font-size:14.3px;font-weight:normal;font-style:italic;color:#7db48f">858</div>
<div class="c v" style="left:847.78px;width:70.97px;top:546.20px;height:33.8px;line-height:33.8px;font-size:14.3px;font-weight:normal;font-style:italic;color:#7db48f">859</div>
<div class="c v" style="left:924.75px;width:70.97px;top:546.20px;height:33.8px;line-height:33.8px;font-size:14.3px;font-weight:normal;font-style:italic;color:#7db48f">792</div>
<div class="c v" style="left:1001.72px;width:70.97px;top:546.20px;height:33.8px;line-height:33.8px;font-size:14.3px;font-weight:normal;font-style:italic;color:#7db48f">793</div>
<div class="c v" style="left:1078.69px;width:70.97px;top:546.20px;height:33.8px;line-height:33.8px;font-size:14.3px;font-weight:normal;font-style:italic;color:#7db48f">793</div>
<div class="c v" style="left:1155.66px;width:70.97px;top:546.20px;height:33.8px;line-height:33.8px;font-size:14.3px;font-weight:normal;font-style:italic;color:#7db48f">793</div>
<div class="c v" style="left:1232.63px;width:70.97px;top:546.20px;height:33.8px;line-height:33.8px;font-size:14.3px;font-weight:normal;font-style:italic;color:#7db48f">1 127</div>
<div class="c v" style="left:1309.60px;width:70.97px;top:546.20px;height:33.8px;line-height:33.8px;font-size:14.3px;font-weight:normal;font-style:italic;color:#7db48f">1 129</div>
<div class="c v" style="left:1386.57px;width:70.97px;top:546.20px;height:33.8px;line-height:33.8px;font-size:14.3px;font-weight:normal;font-style:italic;color:#7db48f">1 130</div>
<div class="c v" style="left:1463.54px;width:70.97px;top:546.20px;height:33.8px;line-height:33.8px;font-size:14.3px;font-weight:normal;font-style:italic;color:#7db48f">1 132</div>
<div class="c v" style="left:1540.51px;width:70.97px;top:546.20px;height:33.8px;line-height:33.8px;font-size:14.3px;font-weight:normal;font-style:italic;color:#7db48f">1 133</div>
<div class="c v" style="left:1617.48px;width:70.97px;top:546.20px;height:33.8px;line-height:33.8px;font-size:14.3px;font-weight:normal;font-style:italic;color:#7db48f">1 134</div>
<div class="c v" style="left:1694.45px;width:70.97px;top:546.20px;height:33.8px;line-height:33.8px;font-size:14.3px;font-weight:normal;font-style:italic;color:#7db48f">1 136</div>
<div class="c v" style="left:1771.42px;width:70.97px;top:546.20px;height:33.8px;line-height:33.8px;font-size:14.3px;font-weight:normal;font-style:italic;color:#7db48f">1 137</div>
<div class="c v" style="left:1848.39px;width:70.97px;top:546.20px;height:33.8px;line-height:33.8px;font-size:14.3px;font-weight:normal;font-style:italic;color:#7db48f">1 139</div>
<div class="c v" style="left:1925.36px;width:70.97px;top:546.20px;height:33.8px;line-height:33.8px;font-size:14.3px;font-weight:normal;font-style:italic;color:#7db48f">1 140</div>
<div class="c v" style="left:2002.33px;width:70.97px;top:546.20px;height:33.8px;line-height:33.8px;font-size:14.3px;font-weight:normal;font-style:italic;color:#7db48f">1 142</div>
<div class="c v" style="left:2079.30px;width:70.97px;top:546.20px;height:33.8px;line-height:33.8px;font-size:14.3px;font-weight:normal;font-style:italic;color:#7db48f">1 143</div>
<div class="c v" style="left:2156.27px;width:70.97px;top:546.20px;height:33.8px;line-height:33.8px;font-size:14.3px;font-weight:normal;font-style:italic;color:#7db48f">1 112</div>
<div class="c v" style="left:2233.24px;width:70.97px;top:546.20px;height:33.8px;line-height:33.8px;font-size:14.3px;font-weight:normal;font-style:italic;color:#7db48f">1 113</div>
<div class="c v" style="left:2310.21px;width:70.97px;top:546.20px;height:33.8px;line-height:33.8px;font-size:14.3px;font-weight:normal;font-style:italic;color:#7db48f">1 114</div>
<div class="c v" style="left:2387.18px;width:70.97px;top:546.20px;height:33.8px;line-height:33.8px;font-size:14.3px;font-weight:normal;font-style:italic;color:#7db48f">13 485</div>
<div class="c v" style="left:2464.15px;width:70.97px;top:546.20px;height:33.8px;line-height:33.8px;font-size:14.3px;font-weight:normal;font-style:italic;color:#7db48f">13 698</div>
<div class="c" style="left:59.70px;top:577.00px;height:33.8px;line-height:33.8px;overflow:visible;transform-origin:0 0;transform:scaleX(0.965);font-size:14.5px;font-weight:normal;font-style:italic;color:#6f7277">Compte courant associé 1</div>
<div class="c v" style="left:539.90px;width:70.97px;top:577.50px;height:33.8px;line-height:33.8px;font-size:14.3px;font-weight:normal;font-style:italic;color:#6f7277">167</div>
<div class="c v" style="left:616.87px;width:70.97px;top:577.50px;height:33.8px;line-height:33.8px;font-size:14.3px;font-weight:normal;font-style:italic;color:#6f7277">167</div>
<div class="c v" style="left:693.84px;width:70.97px;top:577.50px;height:33.8px;line-height:33.8px;font-size:14.3px;font-weight:normal;font-style:italic;color:#6f7277">168</div>
<div class="c v" style="left:770.81px;width:70.97px;top:577.50px;height:33.8px;line-height:33.8px;font-size:14.3px;font-weight:normal;font-style:italic;color:#6f7277">168</div>
<div class="c v" style="left:847.78px;width:70.97px;top:577.50px;height:33.8px;line-height:33.8px;font-size:14.3px;font-weight:normal;font-style:italic;color:#6f7277">169</div>
<div class="c v" style="left:924.75px;width:70.97px;top:577.50px;height:33.8px;line-height:33.8px;font-size:14.3px;font-weight:normal;font-style:italic;color:#6f7277">103</div>
<div class="c v" style="left:1001.72px;width:70.97px;top:577.50px;height:33.8px;line-height:33.8px;font-size:14.3px;font-weight:normal;font-style:italic;color:#6f7277">103</div>
<div class="c v" style="left:1078.69px;width:70.97px;top:577.50px;height:33.8px;line-height:33.8px;font-size:14.3px;font-weight:normal;font-style:italic;color:#6f7277">103</div>
<div class="c v" style="left:1155.66px;width:70.97px;top:577.50px;height:33.8px;line-height:33.8px;font-size:14.3px;font-weight:normal;font-style:italic;color:#6f7277">104</div>
<div class="c v" style="left:1232.63px;width:70.97px;top:577.50px;height:33.8px;line-height:33.8px;font-size:14.3px;font-weight:normal;font-style:italic;color:#6f7277">104</div>
<div class="c v" style="left:1309.60px;width:70.97px;top:577.50px;height:33.8px;line-height:33.8px;font-size:14.3px;font-weight:normal;font-style:italic;color:#6f7277">105</div>
<div class="c v" style="left:1386.57px;width:70.97px;top:577.50px;height:33.8px;line-height:33.8px;font-size:14.3px;font-weight:normal;font-style:italic;color:#6f7277">105</div>
<div class="c v" style="left:1463.54px;width:70.97px;top:577.50px;height:33.8px;line-height:33.8px;font-size:14.3px;font-weight:normal;font-style:italic;color:#6f7277">105</div>
<div class="c v" style="left:1540.51px;width:70.97px;top:577.50px;height:33.8px;line-height:33.8px;font-size:14.3px;font-weight:normal;font-style:italic;color:#6f7277">106</div>
<div class="c v" style="left:1617.48px;width:70.97px;top:577.50px;height:33.8px;line-height:33.8px;font-size:14.3px;font-weight:normal;font-style:italic;color:#6f7277">106</div>
<div class="c v" style="left:1694.45px;width:70.97px;top:577.50px;height:33.8px;line-height:33.8px;font-size:14.3px;font-weight:normal;font-style:italic;color:#6f7277">106</div>
<div class="c v" style="left:1771.42px;width:70.97px;top:577.50px;height:33.8px;line-height:33.8px;font-size:14.3px;font-weight:normal;font-style:italic;color:#6f7277">107</div>
<div class="c v" style="left:1848.39px;width:70.97px;top:577.50px;height:33.8px;line-height:33.8px;font-size:14.3px;font-weight:normal;font-style:italic;color:#6f7277">107</div>
<div class="c v" style="left:1925.36px;width:70.97px;top:577.50px;height:33.8px;line-height:33.8px;font-size:14.3px;font-weight:normal;font-style:italic;color:#6f7277">107</div>
<div class="c v" style="left:2002.33px;width:70.97px;top:577.50px;height:33.8px;line-height:33.8px;font-size:14.3px;font-weight:normal;font-style:italic;color:#6f7277">108</div>
<div class="c v" style="left:2079.30px;width:70.97px;top:577.50px;height:33.8px;line-height:33.8px;font-size:14.3px;font-weight:normal;font-style:italic;color:#6f7277">108</div>
<div class="c v" style="left:2156.27px;width:70.97px;top:577.50px;height:33.8px;line-height:33.8px;font-size:14.3px;font-weight:normal;font-style:italic;color:#6f7277">75</div>
<div class="c v" style="left:2233.24px;width:70.97px;top:577.50px;height:33.8px;line-height:33.8px;font-size:14.3px;font-weight:normal;font-style:italic;color:#6f7277">75</div>
<div class="c v" style="left:2310.21px;width:70.97px;top:577.50px;height:33.8px;line-height:33.8px;font-size:14.3px;font-weight:normal;font-style:italic;color:#6f7277">76</div>
<div class="c v" style="left:2387.18px;width:70.97px;top:577.50px;height:33.8px;line-height:33.8px;font-size:14.3px;font-weight:normal;font-style:italic;color:#6f7277">927</div>
<div class="c v" style="left:2464.15px;width:70.97px;top:577.50px;height:33.8px;line-height:33.8px;font-size:14.3px;font-weight:normal;font-style:italic;color:#6f7277">965</div>
<div class="c" style="left:59.70px;top:610.85px;height:33.8px;line-height:33.8px;overflow:visible;transform-origin:0 0;transform:scaleX(0.965);font-size:14.5px;font-weight:normal;font-style:italic;color:#6f7277">Autres dettes situation antérieure</div>
<div class="c v" style="left:539.90px;width:70.97px;top:611.35px;height:33.8px;line-height:33.8px;font-size:14.3px;font-weight:normal;font-style:italic;color:#6f7277">690</div>
<div class="c v" style="left:616.87px;width:70.97px;top:611.35px;height:33.8px;line-height:33.8px;font-size:14.3px;font-weight:normal;font-style:italic;color:#6f7277">690</div>
<div class="c v" style="left:693.84px;width:70.97px;top:611.35px;height:33.8px;line-height:33.8px;font-size:14.3px;font-weight:normal;font-style:italic;color:#6f7277">690</div>
<div class="c v" style="left:770.81px;width:70.97px;top:611.35px;height:33.8px;line-height:33.8px;font-size:14.3px;font-weight:normal;font-style:italic;color:#6f7277">690</div>
<div class="c v" style="left:847.78px;width:70.97px;top:611.35px;height:33.8px;line-height:33.8px;font-size:14.3px;font-weight:normal;font-style:italic;color:#6f7277">690</div>
<div class="c v" style="left:924.75px;width:70.97px;top:611.35px;height:33.8px;line-height:33.8px;font-size:14.3px;font-weight:normal;font-style:italic;color:#6f7277">690</div>
<div class="c v" style="left:1001.72px;width:70.97px;top:611.35px;height:33.8px;line-height:33.8px;font-size:14.3px;font-weight:normal;font-style:italic;color:#6f7277">690</div>
<div class="c v" style="left:1078.69px;width:70.97px;top:611.35px;height:33.8px;line-height:33.8px;font-size:14.3px;font-weight:normal;font-style:italic;color:#6f7277">690</div>
<div class="c v" style="left:1155.66px;width:70.97px;top:611.35px;height:33.8px;line-height:33.8px;font-size:14.3px;font-weight:normal;font-style:italic;color:#6f7277">690</div>
<div class="c v" style="left:1232.63px;width:70.97px;top:611.35px;height:33.8px;line-height:33.8px;font-size:14.3px;font-weight:normal;font-style:italic;color:#6f7277">690</div>
<div class="c v" style="left:1309.60px;width:70.97px;top:611.35px;height:33.8px;line-height:33.8px;font-size:14.3px;font-weight:normal;font-style:italic;color:#6f7277">690</div>
<div class="c v" style="left:1386.57px;width:70.97px;top:611.35px;height:33.8px;line-height:33.8px;font-size:14.3px;font-weight:normal;font-style:italic;color:#6f7277">690</div>
<div class="c v" style="left:1463.54px;width:70.97px;top:611.35px;height:33.8px;line-height:33.8px;font-size:14.3px;font-weight:normal;font-style:italic;color:#6f7277">690</div>
<div class="c v" style="left:1540.51px;width:70.97px;top:611.35px;height:33.8px;line-height:33.8px;font-size:14.3px;font-weight:normal;font-style:italic;color:#6f7277">690</div>
<div class="c v" style="left:1617.48px;width:70.97px;top:611.35px;height:33.8px;line-height:33.8px;font-size:14.3px;font-weight:normal;font-style:italic;color:#6f7277">690</div>
<div class="c v" style="left:1694.45px;width:70.97px;top:611.35px;height:33.8px;line-height:33.8px;font-size:14.3px;font-weight:normal;font-style:italic;color:#6f7277">690</div>
<div class="c v" style="left:1771.42px;width:70.97px;top:611.35px;height:33.8px;line-height:33.8px;font-size:14.3px;font-weight:normal;font-style:italic;color:#6f7277">690</div>
<div class="c v" style="left:1848.39px;width:70.97px;top:611.35px;height:33.8px;line-height:33.8px;font-size:14.3px;font-weight:normal;font-style:italic;color:#6f7277">690</div>
<div class="c v" style="left:1925.36px;width:70.97px;top:611.35px;height:33.8px;line-height:33.8px;font-size:14.3px;font-weight:normal;font-style:italic;color:#6f7277">690</div>
<div class="c v" style="left:2002.33px;width:70.97px;top:611.35px;height:33.8px;line-height:33.8px;font-size:14.3px;font-weight:normal;font-style:italic;color:#6f7277">690</div>
<div class="c v" style="left:2079.30px;width:70.97px;top:611.35px;height:33.8px;line-height:33.8px;font-size:14.3px;font-weight:normal;font-style:italic;color:#6f7277">690</div>
<div class="c v" style="left:2156.27px;width:70.97px;top:611.35px;height:33.8px;line-height:33.8px;font-size:14.3px;font-weight:normal;font-style:italic;color:#6f7277">690</div>
<div class="c v" style="left:2233.24px;width:70.97px;top:611.35px;height:33.8px;line-height:33.8px;font-size:14.3px;font-weight:normal;font-style:italic;color:#6f7277">690</div>
<div class="c v" style="left:2310.21px;width:70.97px;top:611.35px;height:33.8px;line-height:33.8px;font-size:14.3px;font-weight:normal;font-style:italic;color:#6f7277">690</div>
<div class="c v" style="left:2387.18px;width:70.97px;top:611.35px;height:33.8px;line-height:33.8px;font-size:14.3px;font-weight:normal;font-style:italic;color:#6f7277">8 276</div>
<div class="c v" style="left:2464.15px;width:70.97px;top:611.35px;height:33.8px;line-height:33.8px;font-size:14.3px;font-weight:normal;font-style:italic;color:#6f7277">8 276</div>
<div class="c" style="left:59.70px;top:644.90px;height:33.8px;line-height:33.8px;overflow:visible;transform-origin:0 0;transform:scaleX(0.965);font-size:14.5px;font-weight:normal;font-style:italic;color:#6f7277">Apport en compte associé n°3</div>
<div class="c v" style="left:1232.63px;width:70.97px;top:645.40px;height:33.8px;line-height:33.8px;font-size:14.3px;font-weight:normal;font-style:italic;color:#6f7277">333</div>
<div class="c v" style="left:1309.60px;width:70.97px;top:645.40px;height:33.8px;line-height:33.8px;font-size:14.3px;font-weight:normal;font-style:italic;color:#6f7277">334</div>
<div class="c v" style="left:1386.57px;width:70.97px;top:645.40px;height:33.8px;line-height:33.8px;font-size:14.3px;font-weight:normal;font-style:italic;color:#6f7277">336</div>
<div class="c v" style="left:1463.54px;width:70.97px;top:645.40px;height:33.8px;line-height:33.8px;font-size:14.3px;font-weight:normal;font-style:italic;color:#6f7277">337</div>
<div class="c v" style="left:1540.51px;width:70.97px;top:645.40px;height:33.8px;line-height:33.8px;font-size:14.3px;font-weight:normal;font-style:italic;color:#6f7277">338</div>
<div class="c v" style="left:1617.48px;width:70.97px;top:645.40px;height:33.8px;line-height:33.8px;font-size:14.3px;font-weight:normal;font-style:italic;color:#6f7277">339</div>
<div class="c v" style="left:1694.45px;width:70.97px;top:645.40px;height:33.8px;line-height:33.8px;font-size:14.3px;font-weight:normal;font-style:italic;color:#6f7277">340</div>
<div class="c v" style="left:1771.42px;width:70.97px;top:645.40px;height:33.8px;line-height:33.8px;font-size:14.3px;font-weight:normal;font-style:italic;color:#6f7277">341</div>
<div class="c v" style="left:1848.39px;width:70.97px;top:645.40px;height:33.8px;line-height:33.8px;font-size:14.3px;font-weight:normal;font-style:italic;color:#6f7277">342</div>
<div class="c v" style="left:1925.36px;width:70.97px;top:645.40px;height:33.8px;line-height:33.8px;font-size:14.3px;font-weight:normal;font-style:italic;color:#6f7277">343</div>
<div class="c v" style="left:2002.33px;width:70.97px;top:645.40px;height:33.8px;line-height:33.8px;font-size:14.3px;font-weight:normal;font-style:italic;color:#6f7277">345</div>
<div class="c v" style="left:2079.30px;width:70.97px;top:645.40px;height:33.8px;line-height:33.8px;font-size:14.3px;font-weight:normal;font-style:italic;color:#6f7277">346</div>
<div class="c v" style="left:2156.27px;width:70.97px;top:645.40px;height:33.8px;line-height:33.8px;font-size:14.3px;font-weight:normal;font-style:italic;color:#6f7277">347</div>
<div class="c v" style="left:2233.24px;width:70.97px;top:645.40px;height:33.8px;line-height:33.8px;font-size:14.3px;font-weight:normal;font-style:italic;color:#6f7277">348</div>
<div class="c v" style="left:2310.21px;width:70.97px;top:645.40px;height:33.8px;line-height:33.8px;font-size:14.3px;font-weight:normal;font-style:italic;color:#6f7277">349</div>
<div class="c v" style="left:2387.18px;width:70.97px;top:645.40px;height:33.8px;line-height:33.8px;font-size:14.3px;font-weight:normal;font-style:italic;color:#6f7277">4 283</div>
<div class="c v" style="left:2464.15px;width:70.97px;top:645.40px;height:33.8px;line-height:33.8px;font-size:14.3px;font-weight:normal;font-style:italic;color:#6f7277">4 457</div>
<div class="c" style="left:35.60px;top:681.30px;height:33.8px;line-height:33.8px;overflow:visible;transform-origin:0 0;transform:scaleX(0.965);font-size:14.5px;font-weight:normal;font-style:italic;color:#7db48f">dont autres charges financières</div>
<div class="c v" style="left:462.93px;width:70.97px;top:681.30px;height:33.8px;line-height:33.8px;font-size:14.3px;font-weight:normal;font-style:italic;color:#7db48f">764</div>
<div class="c" style="left:25.60px;top:714.40px;height:33.8px;line-height:33.8px;overflow:visible;transform-origin:0 0;transform:scaleX(0.9);font-size:20px;font-weight:bold;font-style:normal;color:#22262d">Résultat financier</div>
<div class="c v" style="left:462.93px;width:70.97px;top:714.40px;height:33.8px;line-height:33.8px;font-size:20px;font-weight:bold;font-style:normal;color:#6b6e73">-6 988</div>
<div class="c v" style="left:539.90px;width:70.97px;top:714.40px;height:33.8px;line-height:33.8px;font-size:20px;font-weight:bold;font-style:normal;color:#22262d">-856</div>
<div class="c v" style="left:616.87px;width:70.97px;top:714.40px;height:33.8px;line-height:33.8px;font-size:20px;font-weight:bold;font-style:normal;color:#22262d">-857</div>
<div class="c v" style="left:693.84px;width:70.97px;top:714.40px;height:33.8px;line-height:33.8px;font-size:20px;font-weight:bold;font-style:normal;color:#22262d">-857</div>
<div class="c v" style="left:770.81px;width:70.97px;top:714.40px;height:33.8px;line-height:33.8px;font-size:20px;font-weight:bold;font-style:normal;color:#22262d">-858</div>
<div class="c v" style="left:847.78px;width:70.97px;top:714.40px;height:33.8px;line-height:33.8px;font-size:20px;font-weight:bold;font-style:normal;color:#22262d">-859</div>
<div class="c v" style="left:924.75px;width:70.97px;top:714.40px;height:33.8px;line-height:33.8px;font-size:20px;font-weight:bold;font-style:normal;color:#22262d">-792</div>
<div class="c v" style="left:1001.72px;width:70.97px;top:714.40px;height:33.8px;line-height:33.8px;font-size:20px;font-weight:bold;font-style:normal;color:#22262d">-793</div>
<div class="c v" style="left:1078.69px;width:70.97px;top:714.40px;height:33.8px;line-height:33.8px;font-size:20px;font-weight:bold;font-style:normal;color:#22262d">-793</div>
<div class="c v" style="left:1155.66px;width:70.97px;top:714.40px;height:33.8px;line-height:33.8px;font-size:20px;font-weight:bold;font-style:normal;color:#22262d">-793</div>
<div class="c v" style="left:1232.63px;width:70.97px;top:714.40px;height:33.8px;line-height:33.8px;font-size:20px;font-weight:bold;font-style:normal;color:#22262d">-1 127</div>
<div class="c v" style="left:1309.60px;width:70.97px;top:714.40px;height:33.8px;line-height:33.8px;font-size:20px;font-weight:bold;font-style:normal;color:#22262d">-1 129</div>
<div class="c v" style="left:1386.57px;width:70.97px;top:714.40px;height:33.8px;line-height:33.8px;font-size:20px;font-weight:bold;font-style:normal;color:#22262d">-1 130</div>
<div class="c v" style="left:1463.54px;width:70.97px;top:714.40px;height:33.8px;line-height:33.8px;font-size:20px;font-weight:bold;font-style:normal;color:#22262d">-1 132</div>
<div class="c v" style="left:1540.51px;width:70.97px;top:714.40px;height:33.8px;line-height:33.8px;font-size:20px;font-weight:bold;font-style:normal;color:#22262d">-1 133</div>
<div class="c v" style="left:1617.48px;width:70.97px;top:714.40px;height:33.8px;line-height:33.8px;font-size:20px;font-weight:bold;font-style:normal;color:#22262d">-1 134</div>
<div class="c v" style="left:1694.45px;width:70.97px;top:714.40px;height:33.8px;line-height:33.8px;font-size:20px;font-weight:bold;font-style:normal;color:#22262d">-1 136</div>
<div class="c v" style="left:1771.42px;width:70.97px;top:714.40px;height:33.8px;line-height:33.8px;font-size:20px;font-weight:bold;font-style:normal;color:#22262d">-1 137</div>
<div class="c v" style="left:1848.39px;width:70.97px;top:714.40px;height:33.8px;line-height:33.8px;font-size:20px;font-weight:bold;font-style:normal;color:#22262d">-1 139</div>
<div class="c v" style="left:1925.36px;width:70.97px;top:714.40px;height:33.8px;line-height:33.8px;font-size:20px;font-weight:bold;font-style:normal;color:#22262d">-1 140</div>
<div class="c v" style="left:2002.33px;width:70.97px;top:714.40px;height:33.8px;line-height:33.8px;font-size:20px;font-weight:bold;font-style:normal;color:#22262d">-1 142</div>
<div class="c v" style="left:2079.30px;width:70.97px;top:714.40px;height:33.8px;line-height:33.8px;font-size:20px;font-weight:bold;font-style:normal;color:#22262d">-1 143</div>
<div class="c v" style="left:2156.27px;width:70.97px;top:714.40px;height:33.8px;line-height:33.8px;font-size:20px;font-weight:bold;font-style:normal;color:#22262d">-1 112</div>
<div class="c v" style="left:2233.24px;width:70.97px;top:714.40px;height:33.8px;line-height:33.8px;font-size:20px;font-weight:bold;font-style:normal;color:#22262d">-1 113</div>
<div class="c v" style="left:2310.21px;width:70.97px;top:714.40px;height:33.8px;line-height:33.8px;font-size:20px;font-weight:bold;font-style:normal;color:#22262d">-1 114</div>
<div class="c v" style="left:2387.18px;width:70.97px;top:714.40px;height:33.8px;line-height:33.8px;font-size:20px;font-weight:bold;font-style:normal;color:#22262d">-13 485</div>
<div class="c v" style="left:2464.15px;width:70.97px;top:714.40px;height:33.8px;line-height:33.8px;font-size:20px;font-weight:bold;font-style:normal;color:#22262d">-13 698</div>
<div class="c" style="left:25.80px;top:749.35px;height:33.8px;line-height:33.8px;overflow:visible;transform-origin:0 0;transform:scaleX(1);font-size:17.5px;font-weight:normal;font-style:normal;color:#5ea9ae">Produits exceptionnels</div>
<div class="c" style="left:26.30px;top:783.10px;height:33.8px;line-height:33.8px;overflow:visible;transform-origin:0 0;transform:scaleX(1);font-size:17.5px;font-weight:normal;font-style:normal;color:#7db48f">Charges exceptionnelles</div>
<div class="c" style="left:25.60px;top:816.05px;height:33.8px;line-height:33.8px;overflow:visible;transform-origin:0 0;transform:scaleX(0.9);font-size:20px;font-weight:bold;font-style:normal;color:#22262d">Résultat exceptionnel</div>
<div class="c" style="left:25.60px;top:848.65px;height:33.8px;line-height:33.8px;overflow:visible;transform-origin:0 0;transform:scaleX(0.9);font-size:20px;font-weight:bold;font-style:normal;color:#52a1a6">Total produits</div>
<div class="c v" style="left:462.93px;width:70.97px;top:848.65px;height:33.8px;line-height:33.8px;font-size:20px;font-weight:bold;font-style:normal;color:#52a1a6">980 424</div>
<div class="c v" style="left:539.90px;width:70.97px;top:848.65px;height:33.8px;line-height:33.8px;font-size:20px;font-weight:bold;font-style:normal;color:#52a1a6">75 095</div>
<div class="c" style="left:25.30px;top:882.50px;height:33.8px;line-height:33.8px;overflow:visible;transform-origin:0 0;transform:scaleX(0.9);font-size:20px;font-weight:bold;font-style:normal;color:#7db48f">Total charges</div>
<div class="c v" style="left:462.93px;width:70.97px;top:882.50px;height:33.8px;line-height:33.8px;font-size:20px;font-weight:bold;font-style:normal;color:#7db48f">893 179</div>
<div class="c v" style="left:539.90px;width:70.97px;top:882.50px;height:33.8px;line-height:33.8px;font-size:20px;font-weight:bold;font-style:normal;color:#7db48f">3 856</div>
<div class="c v" style="left:616.87px;width:70.97px;top:882.50px;height:33.8px;line-height:33.8px;font-size:20px;font-weight:bold;font-style:normal;color:#7db48f">857</div>
<div class="c v" style="left:693.84px;width:70.97px;top:882.50px;height:33.8px;line-height:33.8px;font-size:20px;font-weight:bold;font-style:normal;color:#7db48f">857</div>
<div class="c v" style="left:770.81px;width:70.97px;top:882.50px;height:33.8px;line-height:33.8px;font-size:20px;font-weight:bold;font-style:normal;color:#7db48f">858</div>
<div class="c v" style="left:847.78px;width:70.97px;top:882.50px;height:33.8px;line-height:33.8px;font-size:20px;font-weight:bold;font-style:normal;color:#7db48f">859</div>
<div class="c v" style="left:924.75px;width:70.97px;top:882.50px;height:33.8px;line-height:33.8px;font-size:20px;font-weight:bold;font-style:normal;color:#7db48f">792</div>
<div class="c v" style="left:1001.72px;width:70.97px;top:882.50px;height:33.8px;line-height:33.8px;font-size:20px;font-weight:bold;font-style:normal;color:#7db48f">793</div>
<div class="c v" style="left:1078.69px;width:70.97px;top:882.50px;height:33.8px;line-height:33.8px;font-size:20px;font-weight:bold;font-style:normal;color:#7db48f">793</div>
<div class="c v" style="left:1155.66px;width:70.97px;top:882.50px;height:33.8px;line-height:33.8px;font-size:20px;font-weight:bold;font-style:normal;color:#7db48f">793</div>
<div class="c v" style="left:1232.63px;width:70.97px;top:882.50px;height:33.8px;line-height:33.8px;font-size:20px;font-weight:bold;font-style:normal;color:#7db48f">1 127</div>
<div class="c v" style="left:1309.60px;width:70.97px;top:882.50px;height:33.8px;line-height:33.8px;font-size:20px;font-weight:bold;font-style:normal;color:#7db48f">1 129</div>
<div class="c v" style="left:1386.57px;width:70.97px;top:882.50px;height:33.8px;line-height:33.8px;font-size:20px;font-weight:bold;font-style:normal;color:#7db48f">257 338</div>
<div class="c v" style="left:1463.54px;width:70.97px;top:882.50px;height:33.8px;line-height:33.8px;font-size:20px;font-weight:bold;font-style:normal;color:#7db48f">1 132</div>
<div class="c v" style="left:1540.51px;width:70.97px;top:882.50px;height:33.8px;line-height:33.8px;font-size:20px;font-weight:bold;font-style:normal;color:#7db48f">1 133</div>
<div class="c v" style="left:1617.48px;width:70.97px;top:882.50px;height:33.8px;line-height:33.8px;font-size:20px;font-weight:bold;font-style:normal;color:#7db48f">1 134</div>
<div class="c v" style="left:1694.45px;width:70.97px;top:882.50px;height:33.8px;line-height:33.8px;font-size:20px;font-weight:bold;font-style:normal;color:#7db48f">1 136</div>
<div class="c v" style="left:1771.42px;width:70.97px;top:882.50px;height:33.8px;line-height:33.8px;font-size:20px;font-weight:bold;font-style:normal;color:#7db48f">1 137</div>
<div class="c v" style="left:1848.39px;width:70.97px;top:882.50px;height:33.8px;line-height:33.8px;font-size:20px;font-weight:bold;font-style:normal;color:#7db48f">1 139</div>
<div class="c v" style="left:1925.36px;width:70.97px;top:882.50px;height:33.8px;line-height:33.8px;font-size:20px;font-weight:bold;font-style:normal;color:#7db48f">1 140</div>
<div class="c v" style="left:2002.33px;width:70.97px;top:882.50px;height:33.8px;line-height:33.8px;font-size:20px;font-weight:bold;font-style:normal;color:#7db48f">1 142</div>
<div class="c v" style="left:2079.30px;width:70.97px;top:882.50px;height:33.8px;line-height:33.8px;font-size:20px;font-weight:bold;font-style:normal;color:#7db48f">1 143</div>
<div class="c v" style="left:2156.27px;width:70.97px;top:882.50px;height:33.8px;line-height:33.8px;font-size:20px;font-weight:bold;font-style:normal;color:#7db48f">1 112</div>
<div class="c v" style="left:2233.24px;width:70.97px;top:882.50px;height:33.8px;line-height:33.8px;font-size:20px;font-weight:bold;font-style:normal;color:#7db48f">1 113</div>
<div class="c v" style="left:2310.21px;width:70.97px;top:882.50px;height:33.8px;line-height:33.8px;font-size:20px;font-weight:bold;font-style:normal;color:#7db48f">239 670</div>
<div class="c v" style="left:2387.18px;width:70.97px;top:882.50px;height:33.8px;line-height:33.8px;font-size:20px;font-weight:bold;font-style:normal;color:#7db48f">16 609</div>
<div class="c v" style="left:2464.15px;width:70.97px;top:882.50px;height:33.8px;line-height:33.8px;font-size:20px;font-weight:bold;font-style:normal;color:#7db48f">16 822</div>
<div class="c" style="left:25.60px;top:916.30px;height:33.8px;line-height:33.8px;overflow:visible;transform-origin:0 0;transform:scaleX(0.9);font-size:20px;font-weight:bold;font-style:normal;color:#22262d">Résultat comptable avant impôt</div>
<div class="c v" style="left:462.93px;width:70.97px;top:916.30px;height:33.8px;line-height:33.8px;font-size:20px;font-weight:bold;font-style:normal;color:#6b6e73">87 245</div>
<div class="c v" style="left:539.90px;width:70.97px;top:916.30px;height:33.8px;line-height:33.8px;font-size:20px;font-weight:bold;font-style:normal;color:#22262d">71 239</div>
<div class="c v" style="left:616.87px;width:70.97px;top:916.30px;height:33.8px;line-height:33.8px;font-size:20px;font-weight:bold;font-style:normal;color:#22262d">-857</div>
<div class="c v" style="left:693.84px;width:70.97px;top:916.30px;height:33.8px;line-height:33.8px;font-size:20px;font-weight:bold;font-style:normal;color:#22262d">-857</div>
<div class="c v" style="left:770.81px;width:70.97px;top:916.30px;height:33.8px;line-height:33.8px;font-size:20px;font-weight:bold;font-style:normal;color:#22262d">-858</div>
<div class="c v" style="left:847.78px;width:70.97px;top:916.30px;height:33.8px;line-height:33.8px;font-size:20px;font-weight:bold;font-style:normal;color:#22262d">-859</div>
<div class="c v" style="left:924.75px;width:70.97px;top:916.30px;height:33.8px;line-height:33.8px;font-size:20px;font-weight:bold;font-style:normal;color:#22262d">-792</div>
<div class="c v" style="left:1001.72px;width:70.97px;top:916.30px;height:33.8px;line-height:33.8px;font-size:20px;font-weight:bold;font-style:normal;color:#22262d">-793</div>
<div class="c v" style="left:1078.69px;width:70.97px;top:916.30px;height:33.8px;line-height:33.8px;font-size:20px;font-weight:bold;font-style:normal;color:#22262d">-793</div>
<div class="c v" style="left:1155.66px;width:70.97px;top:916.30px;height:33.8px;line-height:33.8px;font-size:20px;font-weight:bold;font-style:normal;color:#22262d">-793</div>
<div class="c v" style="left:1232.63px;width:70.97px;top:916.30px;height:33.8px;line-height:33.8px;font-size:20px;font-weight:bold;font-style:normal;color:#22262d">-1 127</div>
<div class="c v" style="left:1309.60px;width:70.97px;top:916.30px;height:33.8px;line-height:33.8px;font-size:20px;font-weight:bold;font-style:normal;color:#22262d">-1 129</div>
<div class="c v" style="left:1386.57px;width:70.97px;top:916.30px;height:33.8px;line-height:33.8px;font-size:20px;font-weight:bold;font-style:normal;color:#22262d">-257 338</div>
<div class="c v" style="left:1463.54px;width:70.97px;top:916.30px;height:33.8px;line-height:33.8px;font-size:20px;font-weight:bold;font-style:normal;color:#22262d">-1 132</div>
<div class="c v" style="left:1540.51px;width:70.97px;top:916.30px;height:33.8px;line-height:33.8px;font-size:20px;font-weight:bold;font-style:normal;color:#22262d">-1 133</div>
<div class="c v" style="left:1617.48px;width:70.97px;top:916.30px;height:33.8px;line-height:33.8px;font-size:20px;font-weight:bold;font-style:normal;color:#22262d">-1 134</div>
<div class="c v" style="left:1694.45px;width:70.97px;top:916.30px;height:33.8px;line-height:33.8px;font-size:20px;font-weight:bold;font-style:normal;color:#22262d">-1 136</div>
<div class="c v" style="left:1771.42px;width:70.97px;top:916.30px;height:33.8px;line-height:33.8px;font-size:20px;font-weight:bold;font-style:normal;color:#22262d">-1 137</div>
<div class="c v" style="left:1848.39px;width:70.97px;top:916.30px;height:33.8px;line-height:33.8px;font-size:20px;font-weight:bold;font-style:normal;color:#22262d">-1 139</div>
<div class="c v" style="left:1925.36px;width:70.97px;top:916.30px;height:33.8px;line-height:33.8px;font-size:20px;font-weight:bold;font-style:normal;color:#22262d">-1 140</div>
<div class="c v" style="left:2002.33px;width:70.97px;top:916.30px;height:33.8px;line-height:33.8px;font-size:20px;font-weight:bold;font-style:normal;color:#22262d">-1 142</div>
<div class="c v" style="left:2079.30px;width:70.97px;top:916.30px;height:33.8px;line-height:33.8px;font-size:20px;font-weight:bold;font-style:normal;color:#22262d">-1 143</div>
<div class="c v" style="left:2156.27px;width:70.97px;top:916.30px;height:33.8px;line-height:33.8px;font-size:20px;font-weight:bold;font-style:normal;color:#22262d">-1 112</div>
<div class="c v" style="left:2233.24px;width:70.97px;top:916.30px;height:33.8px;line-height:33.8px;font-size:20px;font-weight:bold;font-style:normal;color:#22262d">-1 113</div>
<div class="c v" style="left:2310.21px;width:70.97px;top:916.30px;height:33.8px;line-height:33.8px;font-size:20px;font-weight:bold;font-style:normal;color:#22262d">-239 670</div>
<div class="c v" style="left:2387.18px;width:70.97px;top:916.30px;height:33.8px;line-height:33.8px;font-size:20px;font-weight:bold;font-style:normal;color:#22262d">-16 609</div>
<div class="c v" style="left:2464.15px;width:70.97px;top:916.30px;height:33.8px;line-height:33.8px;font-size:20px;font-weight:bold;font-style:normal;color:#22262d">-16 822</div>
<div class="c" style="left:25.80px;top:952.45px;height:33.8px;line-height:33.8px;overflow:visible;transform-origin:0 0;transform:scaleX(1);font-size:17.9px;font-weight:normal;font-style:normal;color:#34373d">Déficit reportable</div>
<div class="c v" style="left:2310.21px;width:70.97px;top:952.45px;height:33.8px;line-height:33.8px;font-size:17.9px;font-weight:normal;font-style:normal;color:#34373d">194 957</div>
<div class="c v" style="left:2387.18px;width:70.97px;top:952.45px;height:33.8px;line-height:33.8px;font-size:17.9px;font-weight:normal;font-style:normal;color:#34373d">447 089</div>
<div class="c v" style="left:2464.15px;width:70.97px;top:952.45px;height:33.8px;line-height:33.8px;font-size:17.9px;font-weight:normal;font-style:normal;color:#34373d">463 698</div>
<div class="c" style="left:25.80px;top:985.85px;height:33.8px;line-height:33.8px;overflow:visible;transform-origin:0 0;transform:scaleX(1);font-size:17.9px;font-weight:normal;font-style:normal;color:#34373d">Résultat fiscal avant impôt</div>
<div class="c v" style="left:1386.57px;width:70.97px;top:985.85px;height:33.8px;line-height:33.8px;font-size:17.9px;font-weight:normal;font-style:normal;color:#34373d">-194 957</div>
<div class="c v" style="left:2310.21px;width:70.97px;top:985.85px;height:33.8px;line-height:33.8px;font-size:17.9px;font-weight:normal;font-style:normal;color:#34373d">-252 132</div>
<div class="c v" style="left:2387.18px;width:70.97px;top:985.85px;height:33.8px;line-height:33.8px;font-size:17.9px;font-weight:normal;font-style:normal;color:#34373d">-16 609</div>
<div class="c v" style="left:2464.15px;width:70.97px;top:985.85px;height:33.8px;line-height:33.8px;font-size:17.9px;font-weight:normal;font-style:normal;color:#34373d">-16 822</div>
<div class="c" style="left:25.80px;top:1019.15px;height:33.8px;line-height:33.8px;overflow:visible;transform-origin:0 0;transform:scaleX(1);font-size:17.9px;font-weight:normal;font-style:normal;color:#34373d">Impôt sur les bénéfices</div>
<div class="c v" style="left:462.93px;width:70.97px;top:1019.15px;height:33.8px;line-height:33.8px;font-size:17.9px;font-weight:normal;font-style:normal;color:#6b6e73">-67 395</div>
<div class="c" style="left:25.80px;top:1053.00px;height:33.8px;line-height:33.8px;overflow:visible;transform-origin:0 0;transform:scaleX(1);font-size:17.9px;font-weight:normal;font-style:normal;color:#34373d">Participation des salariés</div>
<div class="r" style="left:280.40px;top:79.00px;width:316.60px;height:100.60px;border:7px solid #24e400;box-sizing:border-box"></div>
<div class="r" style="left:0.00px;top:505.80px;width:2551.40px;height:185.20px;border:7.5px solid #24e400;box-sizing:border-box"></div>
</div></body></html>
